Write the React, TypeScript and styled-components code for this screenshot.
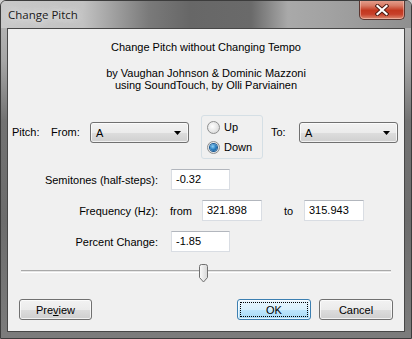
import React from 'react'
import styled, {createGlobalStyle} from 'styled-components'

const GlobalStyle = createGlobalStyle`
  html, body {
    margin: 0;
    padding: 0;
    background: #cfcfcf;
  }
  body {
    font-family: "Liberation Sans", Arial, sans-serif;
    font-size: 11px;
    color: #000;
  }
`

const Window = styled.div`
  width: 412px;
  height: 339px;
  box-sizing: border-box;
  display: flex;
  flex-direction: column;
  border: 1px solid #3c3c3c;
  border-radius: 6px 6px 0 0;
  overflow: hidden;
  background: linear-gradient(180deg, #bdbdbd 0px, #a6a6a6 60px, #727272 120px, #6c6c6c 220px, #7c7c7c 100%);
`

const TitleBar = styled.div`
  height: 27px;
  flex: none;
  display: flex;
  align-items: flex-start;
  background: linear-gradient(
    90deg,
    #c9c9c9 0%,
    #c2c2c2 20%,
    #7a7a7a 36%,
    #676767 46%,
    #6a6a6a 61%,
    #a9a9a9 70%,
    #a2a2a2 80%,
    #8f8f8f 100%
  );
`

const TitleText = styled.span`
  padding: 1px 0 0 7px;
  line-height: 26px;
  font-family: "Open Sans", "Liberation Sans", sans-serif;
  font-size: 11.5px;
  color: #1a1a1a;
  text-shadow: 0 0 6px #e8e8e8, 0 0 10px #e8e8e8;
`

const CloseButton = styled.div`
  margin: -1px 6px 0 auto;
  width: 46px;
  height: 20px;
  box-sizing: border-box;
  border: 1px solid #5b3630;
  border-top: none;
  border-radius: 0 0 5px 5px;
  display: flex;
  align-items: center;
  justify-content: center;
  background: linear-gradient(180deg, #e6a493 0%, #d77a64 30%, #c3381f 55%, #c7402a 75%, #dc8a70 100%);
  box-shadow: inset 0 0 0 1px rgba(255, 220, 210, 0.45);
`

const Client = styled.div`
  flex: 1;
  margin: 0 6px 6px;
  border: 1px solid #474747;
  background: #f0f0f0;
  display: flex;
  flex-direction: column;
`

const Heading = styled.div`
  padding-top: 12px;
  text-align: center;
  line-height: 12px;
`

const Credits = styled.div`
  margin-top: 14px;
`

const PitchRow = styled.div`
  margin-top: 24px;
  height: 44px;
  display: flex;
  align-items: flex-start;
  padding-left: 4px;
`

const RowLabel = styled.span<{$w: number; $ml?: number}>`
  width: ${p => p.$w}px;
  margin: 7px 0 0 ${p => p.$ml || 0}px;
  line-height: 21px;
  white-space: nowrap;
`

const Combo = styled.div`
  margin-top: 7px;
  width: 99px;
  height: 21px;
  box-sizing: border-box;
  border: 1px solid #707070;
  border-radius: 3px;
  padding: 0 0 0 5px;
  display: flex;
  align-items: center;
  background: linear-gradient(180deg, #f2f2f2 0%, #ebebeb 50%, #dddddd 51%, #cfcfcf 100%);
  box-shadow: inset 0 0 0 1px rgba(255, 255, 255, 0.7);
`

const ComboValue = styled.span`
  flex: 1;
`

const ComboArrow = styled.svg`
  margin-right: 7px;
`

const GroupBox = styled.div`
  margin-left: 12px;
  width: 62px;
  height: 44px;
  box-sizing: border-box;
  border: 1px solid #d5dfe5;
  border-radius: 3px;
  padding: 1px 0 0 5px;
`

const RadioRow = styled.div`
  height: 20px;
  display: flex;
  align-items: center;
  gap: 4px;
`

const RadioCircle = styled.span<{$checked?: boolean}>`
  width: 13px;
  height: 13px;
  box-sizing: border-box;
  border-radius: 50%;
  border: 1px solid #8e8f8f;
  background: radial-gradient(circle at 40% 40%, #ffffff 0%, #e6e6e6 55%, #cfcfcf 100%);
  display: flex;
  align-items: center;
  justify-content: center;
  &::after {
    content: '';
    display: ${p => (p.$checked ? 'block' : 'none')};
    width: 7px;
    height: 7px;
    border-radius: 50%;
    background: radial-gradient(circle at 40% 35%, #8fd2f7 0%, #2a7ec0 50%, #0d4f8a 100%);
    box-shadow: 0 0 0 1px #1a5a94;
  }
`

const FormRow = styled.div`
  margin-top: 10px;
  height: 21px;
  display: flex;
  align-items: center;
`

const FieldLabel = styled.span`
  width: 150px;
  text-align: right;
  white-space: nowrap;
`

const Word = styled.span<{$w: number; $ml: number}>`
  width: ${p => p.$w}px;
  margin-left: ${p => p.$ml}px;
`

const TextBox = styled.div<{$w: number; $ml?: number}>`
  width: ${p => p.$w}px;
  height: 21px;
  margin-left: ${p => p.$ml || 0}px;
  box-sizing: border-box;
  border: 1px solid #d9dde3;
  border-top-color: #b2b6bd;
  background: #fff;
  padding-left: 4px;
  line-height: 19px;
`

const Slider = styled.div`
  position: relative;
  margin: 12px 13px 0;
  height: 19px;
`

const Track = styled.div`
  margin-top: 6px;
  height: 3px;
  box-sizing: border-box;
  border-top: 1px solid #a9a9a9;
  border-bottom: 1px solid #ffffff;
  background: #e6e6e6;
`

const Thumb = styled.svg`
  position: absolute;
  top: 0;
`

const ButtonRow = styled.div`
  margin-top: 16px;
  display: flex;
  padding: 0 11px;
`

const Button = styled.div<{$primary?: boolean; $ml?: number}>`
  width: ${p => (p.$primary ? 74 : 74)}px;
  height: 21px;
  margin-left: ${p => p.$ml || 0}px;
  box-sizing: border-box;
  border: 1px solid ${p => (p.$primary ? '#3c7fb1' : '#707070')};
  border-radius: 3px;
  display: flex;
  align-items: center;
  justify-content: center;
  background: ${p =>
    p.$primary
      ? 'linear-gradient(180deg, #eaf6fd 0%, #d9f0fc 50%, #bee6fd 51%, #a7d9f5 100%)'
      : 'linear-gradient(180deg, #f2f2f2 0%, #ebebeb 50%, #dddddd 51%, #cfcfcf 100%)'};
  box-shadow: inset 0 0 0 1px rgba(255, 255, 255, 0.7);
  padding: 2px;
`

const FocusRing = styled.span<{$on?: boolean}>`
  flex: 1;
  align-self: stretch;
  display: flex;
  align-items: center;
  justify-content: center;
  border: 1px dotted ${p => (p.$on ? '#000' : 'transparent')};
`

const Spacer = styled.div`
  flex: 1;
`

const Mnemonic = styled.span`
  text-decoration: underline;
`

function Radio({label, checked}: {label: string; checked?: boolean}) {
  return (
    <RadioRow>
      <RadioCircle $checked={checked} />
      <span>{label}</span>
    </RadioRow>
  )
}

function NoteCombo({value}: {value: string}) {
  return (
    <Combo>
      <ComboValue>{value}</ComboValue>
      <ComboArrow width="7" height="4" viewBox="0 0 7 4">
        <path d="M0 0H7L3.5 4Z" fill="#000" />
      </ComboArrow>
    </Combo>
  )
}

export default function App() {
  // slider spans 370px, thumb is 11px wide
  const sliderPos = 0.493
  return (
    <>
      <GlobalStyle />
      <Window>
        <TitleBar>
          <TitleText>Change Pitch</TitleText>
          <CloseButton>
            <svg width="14" height="12" viewBox="0 0 14 12">
              <path d="M2.5 2L11.5 10M11.5 2L2.5 10" stroke="#4a1a12" strokeWidth="4" strokeLinecap="square" />
              <path d="M2.5 2L11.5 10M11.5 2L2.5 10" stroke="#fff" strokeWidth="2.2" strokeLinecap="square" />
            </svg>
          </CloseButton>
        </TitleBar>
        <Client>
          <Heading>
            <div>Change Pitch without Changing Tempo</div>
            <Credits>
              <div>by Vaughan Johnson &amp; Dominic Mazzoni</div>
              <div>using SoundTouch, by Olli Parviainen</div>
            </Credits>
          </Heading>

          <PitchRow>
            <RowLabel $w={39}>Pitch:</RowLabel>
            <RowLabel $w={39}>From:</RowLabel>
            <NoteCombo value="A" />
            <GroupBox>
              <Radio label="Up" />
              <Radio label="Down" checked />
            </GroupBox>
            <RowLabel $w={28} $ml={8}>
              To:
            </RowLabel>
            <NoteCombo value="A" />
          </PitchRow>

          <FormRow>
            <FieldLabel>Semitones (half-steps):</FieldLabel>
            <TextBox $w={59} $ml={13}>
              -0.32
            </TextBox>
          </FormRow>
          <FormRow>
            <FieldLabel>Frequency (Hz):</FieldLabel>
            <Word $w={32} $ml={12}>
              from
            </Word>
            <TextBox $w={60}>321.898</TextBox>
            <Word $w={20} $ml={22}>
              to
            </Word>
            <TextBox $w={60}>315.943</TextBox>
          </FormRow>
          <FormRow>
            <FieldLabel>Percent Change:</FieldLabel>
            <TextBox $w={59} $ml={13}>
              -1.85
            </TextBox>
          </FormRow>

          <Slider>
            <Track />
            <Thumb width="11" height="19" viewBox="0 0 11 19" style={{left: Math.round(sliderPos * 359)}}>
              <defs>
                <linearGradient id="thumbFill" x1="0" y1="0" x2="1" y2="0">
                  <stop offset="0" stopColor="#fbfbfb" />
                  <stop offset="1" stopColor="#d6d6d6" />
                </linearGradient>
              </defs>
              <path
                d="M1.5 2.5Q1.5 0.5 3.5 0.5H7.5Q9.5 0.5 9.5 2.5V13.5L5.5 18L1.5 13.5Z"
                fill="url(#thumbFill)"
                stroke="#707070"
              />
            </Thumb>
          </Slider>

          <ButtonRow>
            <Button style={{width: 73}}>
              <FocusRing>
                Pre<Mnemonic>v</Mnemonic>iew
              </FocusRing>
            </Button>
            <Spacer />
            <Button $primary>
              <FocusRing $on>OK</FocusRing>
            </Button>
            <Button $ml={8}>
              <FocusRing>Cancel</FocusRing>
            </Button>
          </ButtonRow>
        </Client>
      </Window>
    </>
  )
}
